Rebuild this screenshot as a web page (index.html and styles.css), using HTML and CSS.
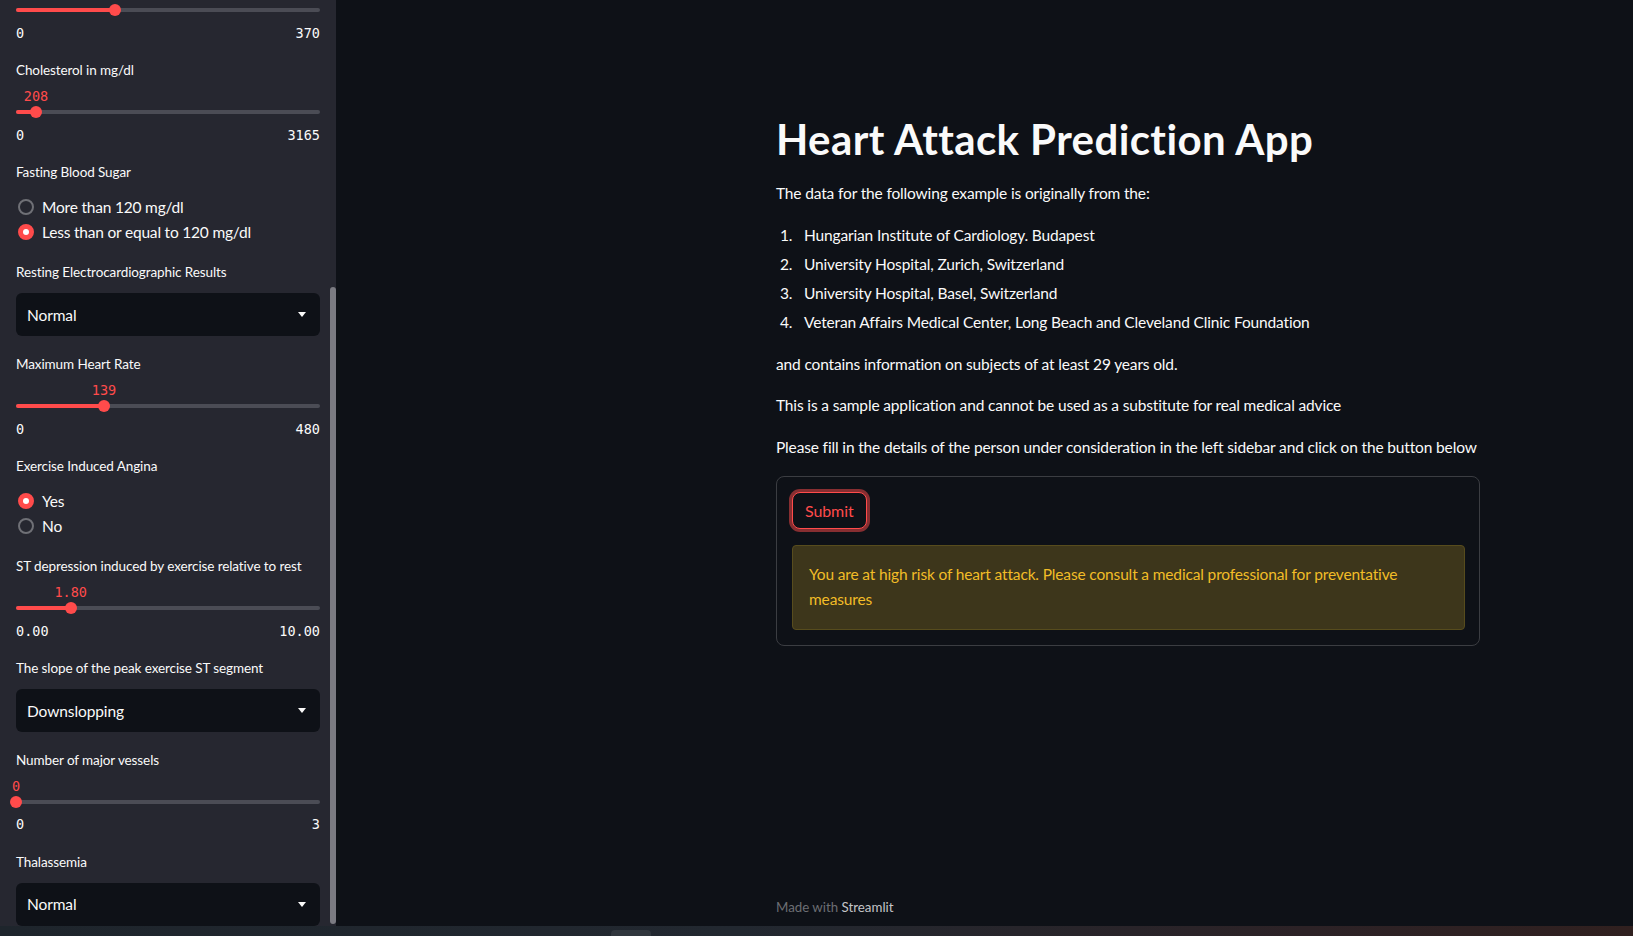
FILE: index.html
```html
<!DOCTYPE html>
<html lang="en">
<head>
<meta charset="utf-8">
<title>Heart Attack Prediction App</title>
<link rel="stylesheet" href="styles.css">
</head>
<body>
<div class="app">
  <aside class="sidebar">
    <div class="sidebar-content">
      <div class="widget slider partial">
        <div class="slider-track" style="--pct: 32.6%"><div class="slider-fill"></div><div class="slider-thumb"></div></div>
        <div class="slider-range"><span>0</span><span>370</span></div>
      </div>
      <div class="widget slider">
        <div class="w-label">Cholesterol in mg/dl</div>
        <div class="slider-value" style="--pct: 6.57%"><span>208</span></div>
        <div class="slider-track" style="--pct: 6.57%"><div class="slider-fill"></div><div class="slider-thumb"></div></div>
        <div class="slider-range"><span>0</span><span>3165</span></div>
      </div>
      <div class="widget radio-widget">
        <div class="w-label">Fasting Blood Sugar</div>
        <div class="radio-group">
          <div class="radio"><span class="radio-dot"></span><span>More than 120 mg/dl</span></div>
          <div class="radio"><span class="radio-dot on"></span><span>Less than or equal to 120 mg/dl</span></div>
        </div>
      </div>
      <div class="widget select-widget">
        <div class="w-label">Resting Electrocardiographic Results</div>
        <div class="select"><span>Normal</span><svg class="caret" width="8" height="5" viewBox="0 0 8 5"><path d="M0 0h8L4 5z" fill="#fafafa"/></svg></div>
      </div>
      <div class="widget slider">
        <div class="w-label">Maximum Heart Rate</div>
        <div class="slider-value" style="--pct: 28.96%"><span>139</span></div>
        <div class="slider-track" style="--pct: 28.96%"><div class="slider-fill"></div><div class="slider-thumb"></div></div>
        <div class="slider-range"><span>0</span><span>480</span></div>
      </div>
      <div class="widget radio-widget">
        <div class="w-label">Exercise Induced Angina</div>
        <div class="radio-group">
          <div class="radio"><span class="radio-dot on"></span><span>Yes</span></div>
          <div class="radio"><span class="radio-dot"></span><span>No</span></div>
        </div>
      </div>
      <div class="widget slider">
        <div class="w-label">ST depression induced by exercise relative to rest</div>
        <div class="slider-value" style="--pct: 18%"><span>1.80</span></div>
        <div class="slider-track" style="--pct: 18%"><div class="slider-fill"></div><div class="slider-thumb"></div></div>
        <div class="slider-range"><span>0.00</span><span>10.00</span></div>
      </div>
      <div class="widget select-widget">
        <div class="w-label">The slope of the peak exercise ST segment</div>
        <div class="select"><span>Downslopping</span><svg class="caret" width="8" height="5" viewBox="0 0 8 5"><path d="M0 0h8L4 5z" fill="#fafafa"/></svg></div>
      </div>
      <div class="widget slider">
        <div class="w-label">Number of major vessels</div>
        <div class="slider-value" style="--pct: 0%"><span>0</span></div>
        <div class="slider-track" style="--pct: 0%"><div class="slider-fill"></div><div class="slider-thumb"></div></div>
        <div class="slider-range"><span>0</span><span>3</span></div>
      </div>
      <div class="widget select-widget">
        <div class="w-label">Thalassemia</div>
        <div class="select"><span>Normal</span><svg class="caret" width="8" height="5" viewBox="0 0 8 5"><path d="M0 0h8L4 5z" fill="#fafafa"/></svg></div>
      </div>
    </div>
    <div class="scrollbar-thumb"></div>
  </aside>
  <main class="main">
    <div class="block">
      <h1 class="title">Heart Attack Prediction App</h1>
      <p>The data for the following example is originally from the:</p>
      <ol class="sources">
        <li>Hungarian Institute of Cardiology. Budapest</li>
        <li>University Hospital, Zurich, Switzerland</li>
        <li>University Hospital, Basel, Switzerland</li>
        <li>Veteran Affairs Medical Center, Long Beach and Cleveland Clinic Foundation</li>
      </ol>
      <p>and contains information on subjects of at least 29 years old.</p>
      <p>This is a sample application and cannot be used as a substitute for real medical advice</p>
      <p>Please fill in the details of the person under consideration in the left sidebar and click on the button below</p>
      <div class="form">
        <button class="btn" type="button">Submit</button>
        <div class="alert">You are at high risk of heart attack. Please consult a medical professional for preventative measures</div>
      </div>
    </div>
    <footer class="footer">Made with <span class="brand">Streamlit</span></footer>
  </main>
</div>
<div class="taskbar"><div class="taskbar-tab"></div></div>
</body>
</html>
```

FILE: styles.css
```css
* { box-sizing: border-box; }

body {
  margin: 0;
  background: #0e1117;
  color: #fafafa;
  font-family: Lato, "Noto Sans", sans-serif;
  overflow: hidden;
}

.app {
  display: flex;
  height: 926px;
  overflow: hidden;
}

/* ---------- sidebar ---------- */
.sidebar {
  position: relative;
  flex: 0 0 336px;
  background: #262730;
  overflow: hidden;
}

.sidebar-content {
  display: flex;
  flex-direction: column;
  gap: 16px;
  padding: 6px 16px 0;
}

.w-label {
  height: 24px;
  line-height: 20.8px;
  font-size: 13.5px;
  letter-spacing: -0.1px;
  white-space: nowrap;
}

.slider {
  padding-bottom: 0.4px;
}

.slider-value {
  position: relative;
  height: 24px;
}

.slider-value span {
  position: absolute;
  left: var(--pct);
  transform: translateX(-50%);
  line-height: 24px;
  font-family: "DejaVu Sans Mono", "Liberation Mono", monospace;
  font-size: 13.5px;
  color: #ff4b4b;
}

.slider-track {
  position: relative;
  height: 4px;
  margin: 2px 0;
  border-radius: 2px;
  background: #4b4c55;
}

.slider-fill {
  width: var(--pct);
  height: 100%;
  border-radius: 2px;
  background: #ff4b4b;
}

.slider-thumb {
  position: absolute;
  left: var(--pct);
  top: 50%;
  width: 12px;
  height: 12px;
  margin: -6px 0 0 -6px;
  border-radius: 50%;
  background: #ff4b4b;
}

.slider-range {
  display: flex;
  justify-content: space-between;
  margin-top: 9.7px;
  line-height: 22px;
  font-family: "DejaVu Sans Mono", "Liberation Mono", monospace;
  font-size: 13.5px;
}

.radio-group {
  margin-top: 8.3px;
  padding-bottom: 1.75px;
}

.radio {
  display: flex;
  align-items: center;
  height: 25px;
  font-size: 15.5px;
  letter-spacing: -0.2px;
}

.radio-dot {
  position: relative;
  flex: none;
  width: 16px;
  height: 16px;
  margin: 0 8px 0 2px;
  border: 2px solid #6f7076;
  border-radius: 50%;
}

.radio-dot.on {
  border-color: #ff4b4b;
  background: #ff4b4b;
}

.radio-dot.on::after {
  content: "";
  position: absolute;
  left: 50%;
  top: 50%;
  width: 6px;
  height: 6px;
  margin: -3px 0 0 -3px;
  border-radius: 50%;
  background: #fff;
}

.select-widget {
  padding-bottom: 1.7px;
}

.select {
  display: flex;
  align-items: center;
  justify-content: space-between;
  height: 43px;
  margin-top: 7px;
  padding: 0 14px 0 11px;
  border-radius: 6px;
  background: #0e1117;
  font-size: 15.5px;
  letter-spacing: -0.1px;
}

.scrollbar-thumb {
  position: absolute;
  right: 0;
  top: 287px;
  bottom: 2px;
  width: 6px;
  border-radius: 3px;
  background: #7b7b82;
}

/* ---------- main ---------- */
.main {
  flex: 1;
  display: flex;
  flex-direction: column;
  padding: 92.6px 0 0 440px;
}

.block {
  width: 704px;
}

.title {
  margin: 0;
  padding: 20px 0 16px;
  font-size: 42px;
  font-weight: 700;
  letter-spacing: 0.4px;
  line-height: 52.8px;
  white-space: nowrap;
}

.block p {
  margin: 0 0 16px;
  font-size: 15.5px;
  letter-spacing: -0.15px;
  line-height: 25.6px;
}

.sources {
  margin: 0 0 16px;
  padding-left: 0;
  list-style: none;
  counter-reset: item;
}

.sources li {
  position: relative;
  margin: 3.4px 0;
  padding-left: 28px;
  font-size: 15.5px;
  letter-spacing: -0.15px;
  line-height: 25.6px;
  counter-increment: item;
}

.sources li::before {
  content: counter(item) ".";
  position: absolute;
  left: 4px;
}

.form {
  display: flex;
  flex-direction: column;
  align-items: flex-start;
  gap: 16px;
  padding: 15px 14px 15px 15px;
  border: 1px solid #3b3d42;
  border-radius: 8px;
}

.btn {
  height: 36.5px;
  padding: 0 12px;
  border: 1px solid #ff4b4b;
  border-radius: 8px;
  background: #0e1117;
  color: #ff4b4b;
  font-family: inherit;
  font-size: 16px;
  letter-spacing: -0.1px;
  box-shadow: 0 0 0 3px rgba(255, 75, 75, 0.5);
}

.alert {
  align-self: stretch;
  padding: 16px;
  border: 1px solid #574c1d;
  border-radius: 4px;
  background: #3d361b;
  color: #f2bd27;
  font-size: 15.5px;
  letter-spacing: -0.15px;
  line-height: 25.6px;
}

.footer {
  margin: auto 0 9px;
  line-height: 20px;
  font-size: 13.3px;
  color: #6c6e73;
}

.footer .brand {
  color: #c4c5c8;
}

/* ---------- bottom strip ---------- */
.taskbar {
  position: relative;
  height: 10px;
  background: linear-gradient(90deg, #1e252c 0%, #222830 45%, #2c2226 80%, #30201f 100%);
}

.taskbar-tab {
  position: absolute;
  left: 611px;
  top: 4px;
  width: 40px;
  height: 6px;
  border-radius: 4px 4px 0 0;
  background: #30363d;
}
```
